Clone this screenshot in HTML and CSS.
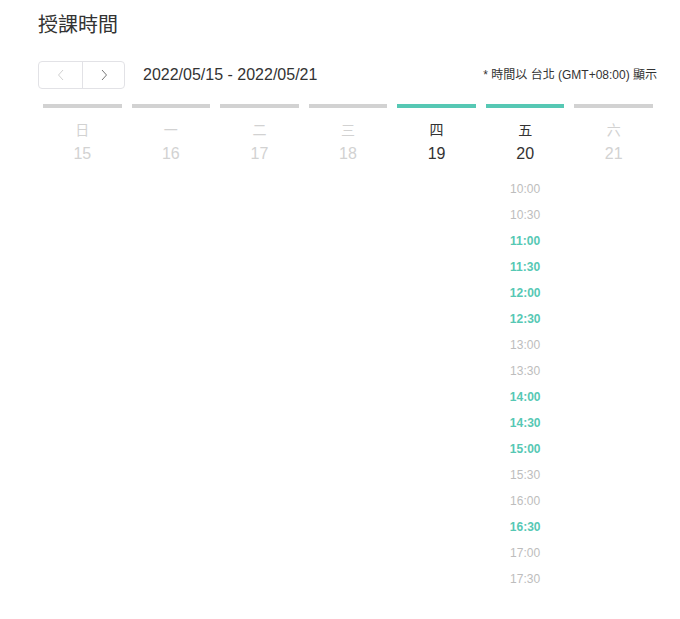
FILE: index.html
```html
<!DOCTYPE html>
<html lang="zh-Hant">
<head>
<meta charset="utf-8">
<title>授課時間</title>
<link rel="stylesheet" href="styles.css">
</head>
<body>
<div class="page">
  <h1 class="title">授課時間</h1>
  <div class="toolbar">
    <div class="nav">
      <button class="nav-btn disabled" aria-label="prev">
        <svg width="8" height="12" viewBox="0 0 8 12"><path d="M6 1 L1.5 6 L6 11" fill="none" stroke="currentColor" stroke-width="1"/></svg>
      </button>
      <button class="nav-btn" aria-label="next">
        <svg width="8" height="12" viewBox="0 0 8 12"><path d="M2 1 L6.5 6 L2 11" fill="none" stroke="currentColor" stroke-width="1"/></svg>
      </button>
    </div>
    <div class="range">2022/05/15 - 2022/05/21</div>
    <div class="tz">* 時間以 台北 (GMT+08:00) 顯示</div>
  </div>
  <div class="week">
    <div class="day"><div class="bar"></div><div class="dname">日</div><div class="dnum">15</div></div>
    <div class="day"><div class="bar"></div><div class="dname">一</div><div class="dnum">16</div></div>
    <div class="day"><div class="bar"></div><div class="dname">二</div><div class="dnum">17</div></div>
    <div class="day"><div class="bar"></div><div class="dname">三</div><div class="dnum">18</div></div>
    <div class="day active"><div class="bar"></div><div class="dname">四</div><div class="dnum">19</div></div>
    <div class="day active"><div class="bar"></div><div class="dname">五</div><div class="dnum">20</div>
      <ul class="times">
        <li>10:00</li>
        <li>10:30</li>
        <li class="open">11:00</li>
        <li class="open">11:30</li>
        <li class="open">12:00</li>
        <li class="open">12:30</li>
        <li>13:00</li>
        <li>13:30</li>
        <li class="open">14:00</li>
        <li class="open">14:30</li>
        <li class="open">15:00</li>
        <li>15:30</li>
        <li>16:00</li>
        <li class="open">16:30</li>
        <li>17:00</li>
        <li>17:30</li>
      </ul>
    </div>
    <div class="day"><div class="bar"></div><div class="dname">六</div><div class="dnum">21</div></div>
  </div>
</div>
</body>
</html>
```
FILE: styles.css
```css
html, body {
  margin: 0;
  padding: 0;
  background: #fff;
}
body {
  font-family: "Liberation Sans", "Noto Sans CJK TC", sans-serif;
  color: #333;
}
.page {
  width: 620px;
  padding: 11px 0 0 38px;
}
.title {
  margin: 0;
  font-size: 20px;
  line-height: 28px;
  font-weight: normal;
  color: #333;
}
.toolbar {
  display: flex;
  align-items: center;
  margin-top: 22px;
  height: 28px;
}
.nav {
  display: flex;
  border: 1px solid #e2e2e6;
  border-radius: 4px;
  height: 26px;
}
.nav-btn {
  width: 43px;
  height: 26px;
  padding: 0;
  border: 0;
  background: transparent;
  color: #777;
  display: flex;
  align-items: center;
  justify-content: center;
}
.nav-btn + .nav-btn {
  border-left: 1px solid #e2e2e6;
  width: 42px;
}
.nav-btn.disabled {
  color: #d0d0d0;
}
.range {
  margin-left: 18px;
  font-size: 16px;
  line-height: 20px;
  color: #333;
}
.tz {
  margin-left: auto;
  font-size: 12px;
  line-height: 16px;
  color: #333;
  margin-right: 1px;
}
.week {
  display: grid;
  grid-template-columns: repeat(7, 1fr);
  margin-top: 15px;
}
.day {
  display: flex;
  flex-direction: column;
  align-items: center;
}
.bar {
  align-self: stretch;
  height: 4px;
  margin: 0 5px;
  background: #d2d2d2;
}
.day.active .bar {
  background: #56c8b4;
}
.dname {
  margin-top: 12px;
  font-size: 14px;
  line-height: 20px;
  color: #d2d2d2;
}
.dnum {
  margin-top: 4px;
  font-size: 16px;
  line-height: 20px;
  color: #d2d2d2;
}
.day.active .dname,
.day.active .dnum {
  color: #333;
}
.times {
  list-style: none;
  margin: 12px 0 0;
  padding: 0;
  text-align: center;
}
.times li {
  font-size: 12px;
  line-height: 26px;
  color: #bdbdbd;
}
.times li.open {
  color: #56c8b4;
  font-weight: bold;
}
```
